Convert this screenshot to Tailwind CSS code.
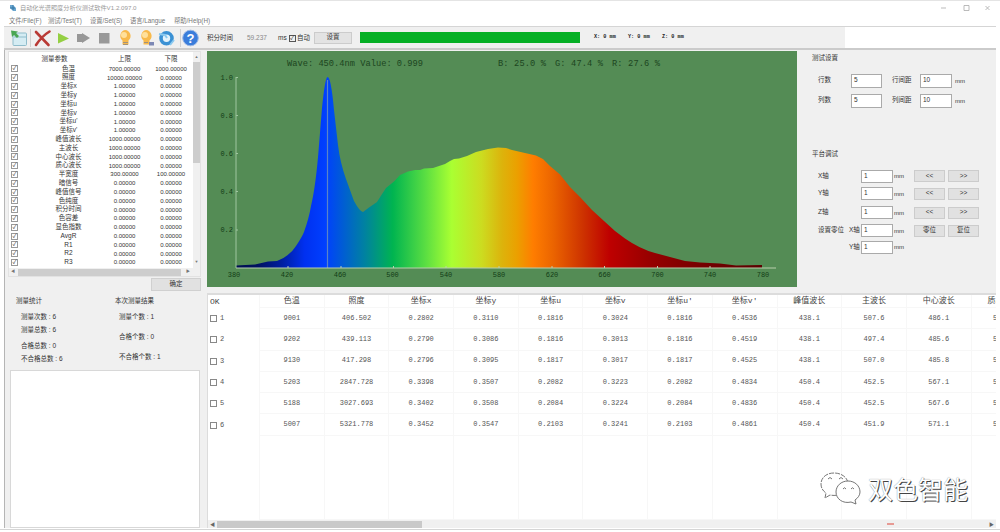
<!DOCTYPE html>
<html lang="zh-CN">
    <head>
        <meta charset="UTF-8" />
        <meta name="viewport" content="width=device-width, initial-scale=1.0" />
        <title>测试软件</title>
        <script src="https://cdn.jsdelivr.net/npm/@tailwindcss/browser@4"></script>
    </head>
    <body class="relative w-[1000px] h-[532px] overflow-hidden bg-white flex flex-col font-['Liberation_Sans','Noto_Sans_CJK_SC',sans-serif] text-[6.5px] leading-none text-[#333]">
        <!-- Title bar -->
        <div class="h-[15px] shrink-0 flex items-center border-t border-[#e4e4e4] pl-[9px] pr-[9px] text-[#999]">
            <svg class="w-[8px] h-[8px] mr-[3px]" viewBox="0 0 8 8"><path d="M1 1h3l3 3v3H4L1 4z" fill="#6ba6cf" /><path d="M1 4h5M4 1v5" stroke="#2c6f9f" stroke-width=".8" /></svg>
            <span class="whitespace-nowrap text-[6.2px]">自动化光谱照度分析仪测试软件V1.2.097.0</span>
            <svg class="ml-auto w-[54px] h-[8px]" viewBox="0 0 54 8" fill="none" stroke="#aaa" stroke-width=".8"><path d="M4 4h5M27 1.5h5v5h-5zM48.500 2l4 4M52.500 2l-4 4" /></svg>
        </div>
        <!-- Menu -->
        <div class="h-[11px] shrink-0 flex items-center pl-[9px] pt-[1px] text-[6.3px] text-[#777] whitespace-nowrap">
            <span class="w-[39px]">文件/File(F)</span>
            <span class="w-[42px]">测试/Test(T)</span>
            <span class="w-[40px]">设置/Set(S)</span>
            <span class="w-[44px]">语言/Langue</span>
            <span>帮助/Help(H)</span>
        </div>
        <!-- Toolbar -->
        <div class="h-[22px] shrink-0 ml-[4px] mr-[4px] border-t border-[#d5d5d5] flex">
            <div class="w-[841px] bg-[#f0f0f0] flex items-center whitespace-nowrap">
                <svg class="w-[202px] h-[21px] shrink-0" viewBox="4 26 202 21">
                    <rect x="13" y="32" width="13.500" height="12.500" rx="1" fill="#d5ecf3" stroke="#8fbccb" />
                    <path d="M14 36h12" stroke="#8fbccb" />
                    <path d="M11 29.500l7 1-2 1.500 3 3-2 2-3-3-2 2z" fill="#4aa653" />
                    <path d="M30.500 28v18M180.500 28v18" stroke="#d0d0d0" />
                    <path d="M36 31l12.500 13M49.500 30.500Q42 35 36 44" fill="none" stroke="#b93a35" stroke-width="2.600" stroke-linecap="round" />
                    <path d="M58 32l11 5.500-11 5z" fill="#94cf43" />
                    <path d="M77 33h5v-1l8 5-8 5v-1h-5z" fill="#979797" />
                    <rect x="99" y="32" width="10.500" height="10.500" fill="#999" />
                    <path d="M125 29a6 6 0 0 1 3.500 10.500v4h-6v-4A6 6 0 0 1 125 29z" fill="#f8b94b" />
                    <circle cx="124" cy="34" r="3" fill="#ffe09a" />
                    <path d="M123 41.500h5M123 43.500h5" stroke="#a2937c" />
                    <path d="M146 29a6 6 0 0 1 3.500 10.500v4h-6v-4A6 6 0 0 1 146 29z" fill="#f8b94b" />
                    <circle cx="145" cy="34" r="3" fill="#ffe09a" />
                    <path d="M149 41h5v3.500h-5z" fill="#7c88b5" />
                    <path d="M144 41.500h4" stroke="#a2937c" />
                    <circle cx="166.500" cy="37.300" r="5.500" fill="#e4f3fc" stroke="#3b91d4" stroke-width="3.600" />
                    <path d="M159 33l6 1 2 3M170 44l4-5" fill="none" stroke="#8ccaf0" stroke-width="2" />
                    <circle cx="190.500" cy="37" r="7.800" fill="#3a7ddb" stroke="#9bb9e6" />
                    <text x="190.500" y="41.500" text-anchor="middle" font-size="13" font-weight="bold" fill="#fff">?</text>
                </svg>
                <span class="ml-[1px] w-[40px] pt-[2px]">积分时间</span>
                <span class="w-[31px] pt-[1px] text-[#888]">59.237</span>
                <span class="w-[11px] pt-[1px]">ms</span>
                <span class="w-[7px] h-[7px] mt-[1px] border border-[#555] text-[6px] leading-[5px]">✓</span>
                <span class="ml-[1px] w-[17px] pt-[2px]">自动</span>
                <button class="w-[38px] h-[12px] border border-[#ccc] bg-[#e3e3e3]">设置</button>
                <div class="ml-[8px] w-[220px] h-[11px] bg-[#06b025]"></div>
                <div class="ml-[14px] flex text-[5.2px] text-[#222] font-bold font-['Liberation_Mono',monospace]">
                    <span class="w-[34px]">X: 0 mm</span>
                    <span class="w-[34px]">Y: 0 mm</span>
                    <span>Z: 0 mm</span>
                </div>
            </div>
        </div>
        <div class="h-[2px] shrink-0 ml-[4px] mr-[4px] bg-[#cbcbcb]"></div>

        <div class="h-[478px] shrink-0 ml-[4px] mr-[4px] flex bg-[#f0f0f0] border-l border-[#b5b5b5]">
            <!-- Left column -->
            <div class="w-[202px] shrink-0 pl-[3px] flex flex-col">
                <div class="mt-[1px] w-[193px] h-[226px] bg-white border border-[#e2e2e2] flex flex-col">
                    <div class="flex h-[217px]">
                        <div class="flex-1 pt-[3px]">
                            <div class="grid grid-cols-[91px_49px_44px] h-[9px] items-center text-center">
                                <span>测量参数</span><span>上限</span><span>下限</span>
                            </div>
                            <div id="params" class="pt-[.5px] text-[6px]"></div>
                        </div>
                        <div class="w-[8px] bg-[#f0f0f0] flex flex-col items-center justify-between text-[4px] text-[#777]">
                            <span class="h-[10px] pt-[3px]">▲</span>
                            <span class="w-[7px] h-[101px] bg-[#cdcdcd]"></span>
                            <span class="mt-auto h-[8px]">▼</span>
                        </div>
                    </div>
                    <div class="h-[8px] bg-[#f0f0f0] flex items-center text-[4px] text-[#777]">
                        <span class="w-[9px] pl-[2px]">◀</span>
                        <span class="w-[163px] h-[7px] bg-[#cdcdcd]"></span>
                        <span class="ml-[5px]">▶</span>
                    </div>
                </div>
                <button class="mt-[1px] ml-[143px] w-[50px] h-[13px] shrink-0 border border-[#d0d0d0] bg-[#e1e1e1]">确定</button>
                <div class="h-[79px] flex pt-[7px] whitespace-nowrap">
                    <div class="w-[99px] pl-[8px]">
                        <p class="mb-[9px]">测量统计</p>
                        <div class="pl-[5px]">
                            <p class="mb-[7px]">测量次数 : 6</p>
                            <p class="mb-[9px]">测量总数 : 6</p>
                            <p class="mb-[6.5px]">合格总数 : 0</p>
                            <p>不合格总数 : 6</p>
                        </div>
                    </div>
                    <div class="pl-[8px]">
                        <p class="mb-[9px]">本次测量结果</p>
                        <div class="pl-[4px]">
                            <p class="mb-[14px]">测量个数 : 1</p>
                            <p class="mb-[13.5px]">合格个数 : 0</p>
                            <p>不合格个数 : 1</p>
                        </div>
                    </div>
                </div>
                <div class="ml-[2px] w-[190px] h-[158px] shrink-0 bg-white border border-[#d8d8d8]"></div>
            </div>

            <div class="w-[789px] flex flex-col">
                <div class="flex h-[243px] shrink-0">
                    <!-- Spectrum -->
                    <svg class="mt-[1px] w-[590px] h-[236px] shrink-0 bg-[#548c55] font-['Liberation_Mono',monospace]" viewBox="207 51 590 236">
                        <defs>
                            <linearGradient id="spectrum" gradientUnits="userSpaceOnUse" x1="236" y1="0" x2="762" y2="0">
                                <stop offset="0" stop-color="#000f50" />
                                <stop offset=".04" stop-color="#00105f" />
                                <stop offset=".087" stop-color="#001ea0" />
                                <stop offset=".13" stop-color="#0030f0" />
                                <stop offset=".17" stop-color="#0040ff" />
                                <stop offset=".2" stop-color="#005ad8" />
                                <stop offset=".245" stop-color="#0082a0" />
                                <stop offset=".298" stop-color="#00b450" />
                                <stop offset=".36" stop-color="#5ade42" />
                                <stop offset=".41" stop-color="#aaff32" />
                                <stop offset=".467" stop-color="#ccdc20" />
                                <stop offset=".505" stop-color="#dcb40c" />
                                <stop offset=".534" stop-color="#eba000" />
                                <stop offset=".565" stop-color="#ff7d00" />
                                <stop offset=".603" stop-color="#eb6400" />
                                <stop offset=".66" stop-color="#cd3200" />
                                <stop offset=".71" stop-color="#be0000" />
                                <stop offset=".79" stop-color="#960000" />
                                <stop offset=".88" stop-color="#780000" />
                                <stop offset="1" stop-color="#5a0000" />
                            </linearGradient>
                        </defs>
                        <path fill="url(#spectrum)" d="M236 268V265.500L255 264.500L268 261.500L277 261Q290 256 296 246Q302 237 304 232Q309 218 311 206Q316 185 319 145L322 108Q325 78 327.500 77Q331 77 334 110L338 145Q340 162 346 179L354 201Q360 212 363 212L369 207.500L377 202Q382 194 386 188L394 181.500L400 175L408 171.500L415 170L420 170L424 168.500L433 168L445 164L450 161L454 159L459 158.500L467 156L476 152L488 149L498 147.500L506 148L512 150L525 153L536 155.500L543 159L550 166L560 174.500L570 187L580 197L592 210L604 221L615 231L625 238.500Q640 249 655 253L670 257L685 261L700 262.500L720 263.500L736 265.500L762 265V268z" />
                        <path d="M327.500 80V268" stroke="#5b84c8" stroke-width="1.200" />
                        <path d="M236 77V268M236 77.500h2M236 115.500h2M236 153.500h2M236 191.500h2M236 230h2" fill="none" stroke="#9fc6a0" />
                        <path d="M236 268H776M288 266v2M341 266v2M393.500 266v2M446 266v2M499 266v2M552 266v2M604.500 266v2M657.500 266v2M710 266v2" fill="none" stroke="#b9cfae" />
                        <g fill="#123c16" font-size="7" text-anchor="end">
                            <text x="233" y="80">1.0</text><text x="233" y="118">0.8</text><text x="233" y="156">0.6</text><text x="233" y="194">0.4</text><text x="233" y="232">0.2</text>
                        </g>
                        <g fill="#123c16" font-size="7" text-anchor="middle">
                            <text x="234" y="276.500">380</text><text x="287" y="276.500">420</text><text x="340" y="276.500">460</text><text x="392.500" y="276.500">500</text><text x="446" y="276.500">540</text><text x="499" y="276.500">580</text><text x="552" y="276.500">620</text><text x="604.500" y="276.500">660</text><text x="657.500" y="276.500">700</text><text x="710" y="276.500">740</text><text x="763" y="276.500">780</text>
                        </g>
                        <g fill="#1c451f" font-size="8.7">
                            <text x="287" y="65.500" textLength="136">Wave: 450.4nm Value: 0.999</text>
                            <text x="498" y="65.500" textLength="48">B: 25.0 %</text>
                            <text x="555" y="65.500" textLength="48">G: 47.4 %</text>
                            <text x="612" y="65.500" textLength="48">R: 27.6 %</text>
                        </g>
                    </svg>
                    <!-- Settings -->
                    <div class="pl-[15px] pt-[5px] w-[199px] whitespace-nowrap">
                        <p class="mb-[12px]">测试设置</p>
                        <div class="pl-[6px] grid grid-cols-[33px_41px_28px_35px_auto] gap-y-[6px] items-center">
                            <span>行数</span><span class="w-[31px] h-[14px] pl-[2px] pt-[2px] bg-white border border-[#aaa]">5</span><span>行间距</span><span class="w-[32px] h-[14px] pl-[2px] pt-[2px] bg-white border border-[#aaa]">10</span><span class="text-[6px]">mm</span>
                            <span>列数</span><span class="w-[31px] h-[14px] pl-[2px] pt-[2px] bg-white border border-[#aaa]">5</span><span>列间距</span><span class="w-[32px] h-[14px] pl-[2px] pt-[2px] bg-white border border-[#aaa]">10</span><span class="text-[6px]">mm</span>
                        </div>
                        <p class="mt-[43px] mb-[11px]">平台调试</p>
                        <div id="axes" class="pl-[6px] text-[6.5px]"></div>
                    </div>
                </div>
                <!-- Results -->
                <div class="w-[789px] h-[235px] bg-white border-t-2 border-l border-[#dcdcdc] flex flex-col overflow-hidden">
                    <div id="results" class="flex-1 font-['Liberation_Mono','Noto_Sans_CJK_SC',monospace] text-[7px] text-[#555]"></div>
                    <div class="h-[8px] bg-[#f0f0f0] flex items-center text-[5px] text-[#666]">
                        <span class="w-[9px] pl-[2px]">◀</span>
                        <span class="w-[205px] h-[7px] bg-[#c9c9c9]"></span>
                        <span class="ml-[465px] w-[7px] h-[2px] bg-[#e79a94]"></span>
                        <span class="ml-auto pr-[2px]">▶</span>
                    </div>
                </div>
            </div>
        </div>
        <div class="h-px shrink-0 mt-[1px] bg-[#d5d5d5]"></div>

        <!-- Watermark -->
        <div class="absolute left-[820px] top-[471px] flex items-center">
            <svg class="w-[42px] h-[34px]" viewBox="0 0 42 34" fill="#fff" stroke="#666" stroke-width=".9">
                <path d="M14 2C6 2 1 7 1 13c0 4 2 7 5 9l-1 5 5-3c9 2 18-3 18-11C28 7 22 2 14 2z" stroke-dasharray="5 1" />
                <path d="M28 10c-7 0-12 5-12 11 0 7 7 12 15 10l5 2-1-4c3-2 5-5 5-8 0-6-5-11-12-11z" />
                <path d="M8 8q2-3 4 0M19 8q2-3 4 0M23 18q1.500-2.500 3 0M31 18q1.500-2.500 3 0" fill="none" />
            </svg>
            <span class="ml-[6px] text-[25px] leading-[34px] text-white font-['Noto_Sans_CJK_SC',sans-serif] [text-shadow:1px_1px_0_#444,0_0_1px_#777] whitespace-nowrap">双色智能</span>
        </div>

        <script>
            const params = [
                ["色温", "7000.00000", "1000.00000"],
                ["照度", "10000.00000", "0.00000"],
                ["坐标x", "1.00000", "0.00000"],
                ["坐标y", "1.00000", "0.00000"],
                ["坐标u", "1.00000", "0.00000"],
                ["坐标v", "1.00000", "0.00000"],
                ["坐标u'", "1.00000", "0.00000"],
                ["坐标v'", "1.00000", "0.00000"],
                ["峰值波长", "1000.00000", "0.00000"],
                ["主波长", "1000.00000", "0.00000"],
                ["中心波长", "1000.00000", "0.00000"],
                ["质心波长", "1000.00000", "0.00000"],
                ["半宽度", "300.00000", "100.00000"],
                ["暗信号", "0.00000", "0.00000"],
                ["峰值信号", "0.00000", "0.00000"],
                ["色纯度", "0.00000", "0.00000"],
                ["积分时间", "0.00000", "0.00000"],
                ["色容差", "0.00000", "0.00000"],
                ["显色指数", "0.00000", "0.00000"],
                ["AvgR", "0.00000", "0.00000"],
                ["R1", "0.00000", "0.00000"],
                ["R2", "0.00000", "0.00000"],
                ["R3", "0.00000", "0.00000"],
            ];
            document.getElementById("params").innerHTML = params.map(([name, max, min]) => `
                <div class="grid grid-cols-[14px_77px_49px_44px] h-[8.8px] items-center text-center whitespace-nowrap">
                    <span class="ml-[2px] w-[7px] h-[7px] border border-[#999] text-[6px] leading-[5px]">✓</span>
                    <span class="pl-[14px] text-[6.5px]">${name}</span><span>${max}</span><span>${min}</span>
                </div>`).join("");

            const axes = [
                ["X轴", "", "&lt;&lt;", "&gt;&gt;", "h-[16px]"],
                ["Y轴", "", "&lt;&lt;", "&gt;&gt;", "h-[19px]"],
                ["Z轴", "", "&lt;&lt;", "&gt;&gt;", "h-[19px]"],
                ["设置零位", "X轴", "零位", "复位", "h-[17px]"],
                ["", "Y轴", "", "", "h-[16px]"],
            ];
            document.getElementById("axes").innerHTML = axes.map(([label, axis, a, b, h]) => `
                <div class="${h} grid grid-cols-[31px_12px_33px_20px_34px_auto] items-center">
                    <span>${label}</span><span>${axis}</span>
                    <span class="w-[32px] h-[13px] pl-[2px] pt-[2px] bg-white border border-[#aaa]">1</span>
                    <span class="text-[6px]">mm</span>
                    ${a && `<button class="w-[31px] h-[12px] bg-[#e1e1e1] border border-[#ccc]">${a}</button>
                    <button class="w-[31px] h-[12px] bg-[#e1e1e1] border border-[#ccc]">${b}</button>`}
                </div>`).join("");

            const head = ["OK", "色温", "照度", "坐标x", "坐标y", "坐标u", "坐标v", "坐标u'", "坐标v'", "峰值波长", "主波长", "中心波长", "质心波长"];
            const rows = [
                ["1", "9001", "406.502", "0.2802", "0.3110", "0.1816", "0.3024", "0.1816", "0.4536", "438.1", "507.6", "486.1", "501.3"],
                ["2", "9202", "439.113", "0.2790", "0.3086", "0.1816", "0.3013", "0.1816", "0.4519", "438.1", "497.4", "485.6", "501.3"],
                ["3", "9130", "417.298", "0.2796", "0.3095", "0.1817", "0.3017", "0.1817", "0.4525", "438.1", "507.0", "485.8", "501.3"],
                ["4", "5203", "2847.728", "0.3398", "0.3507", "0.2082", "0.3223", "0.2082", "0.4834", "450.4", "452.5", "567.1", "551.3"],
                ["5", "5188", "3027.693", "0.3402", "0.3508", "0.2084", "0.3224", "0.2084", "0.4836", "450.4", "452.5", "567.6", "551.3"],
                ["6", "5007", "5321.778", "0.3452", "0.3547", "0.2103", "0.3241", "0.2103", "0.4861", "450.4", "451.9", "571.1", "551.3"],
            ];
            const cell = "flex items-center justify-center border-l border-b border-[#f7f7f7]";
            document.getElementById("results").innerHTML =
                `<div class="grid grid-cols-[51px_repeat(12,64.7px)] h-[13px] text-[8px] text-[#444]">${head.map((t, i) =>
                    i ? `<span class="${cell}">${t}</span>` : `<span class="flex items-center pl-[2px]">${t}</span>`).join("")}</div>` +
                rows.map(r => `<div class="grid grid-cols-[51px_repeat(12,64.7px)] h-[21.3px]">${r.map((t, i) =>
                    i ? `<span class="${cell}">${t}</span>`
                      : `<span class="flex items-center gap-[3px] pl-[2px]"><i class="w-[7px] h-[7px] border border-[#888]"></i>${t}</span>`).join("")}</div>`).join("") +
                `<div class="grid grid-cols-[51px_repeat(12,64.7px)] h-[84px]"><span></span>${`<span class="${cell}"></span>`.repeat(12)}</div>`;
        </script>
    </body>
</html>
